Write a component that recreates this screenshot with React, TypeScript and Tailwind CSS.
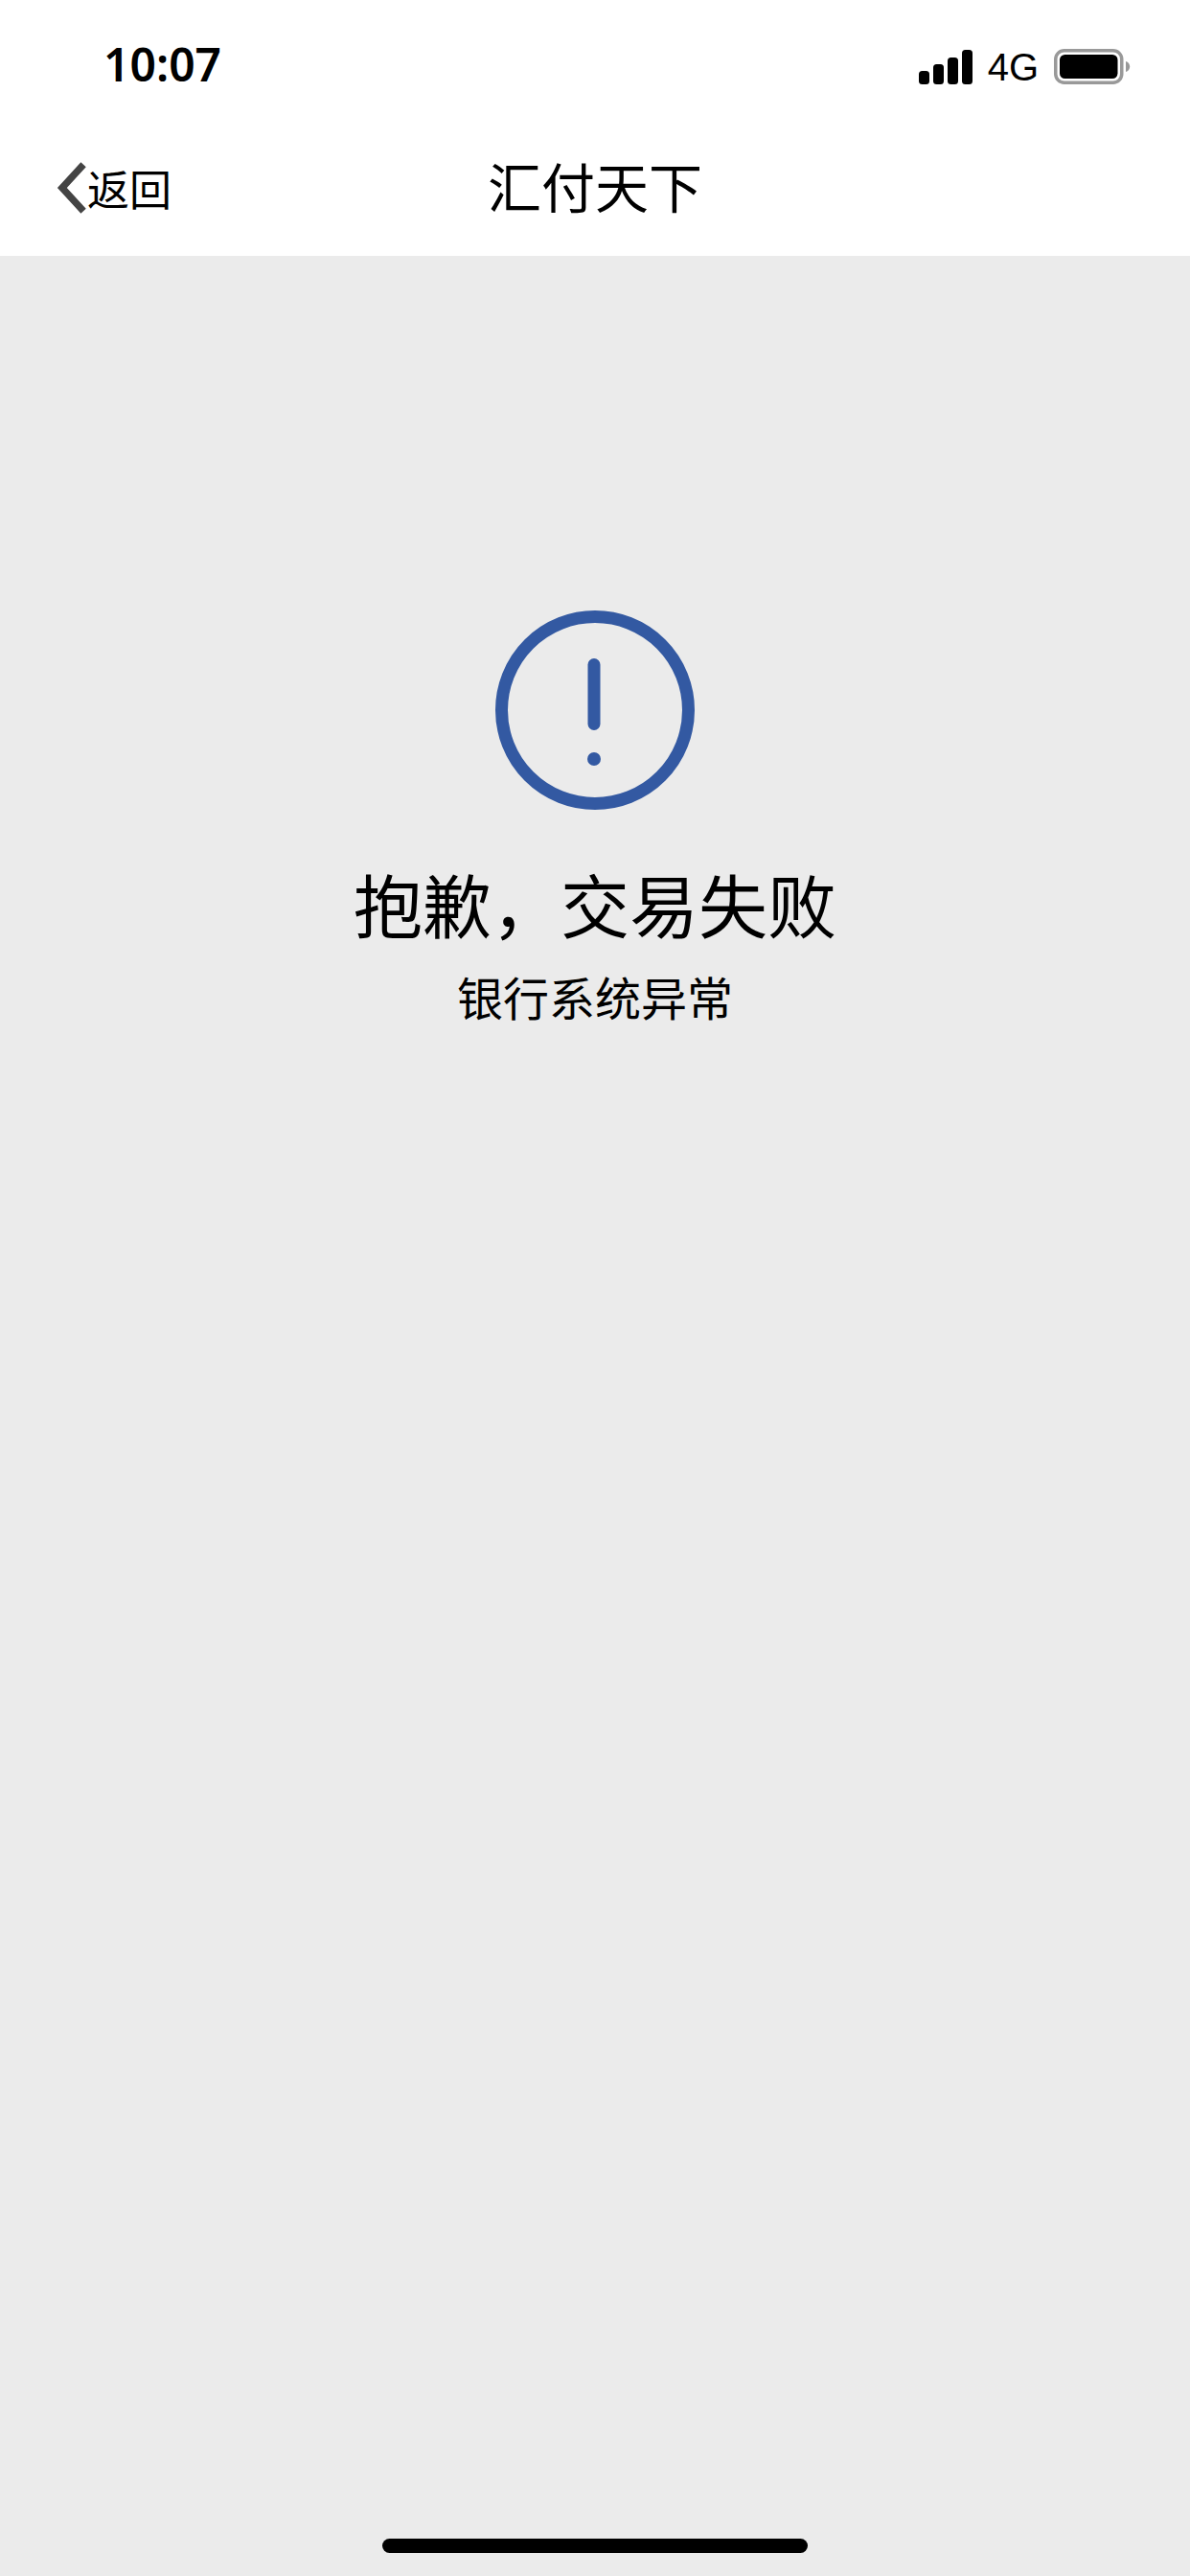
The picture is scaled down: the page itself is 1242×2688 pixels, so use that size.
import React from 'react';

const cjk = { sans: "font-['Noto_Sans_CJK_SC',sans-serif]" };

const StatusBar: React.FC = () => (
  <div className="flex h-[135px] items-start justify-between bg-white pl-[108px] pr-[62px] pt-[34px]">
    <span className="font-['Noto_Sans',sans-serif] text-[48px] font-semibold leading-[66px] text-black">10:07</span>
    <div className="flex items-center">
      {/* Signal */}
      <svg width="56" height="36" viewBox="0 0 56 36" className="mt-[14px] mr-[16px]">
        <rect x="0" y="22" width="11" height="14" rx="3.5" fill="#000" />
        <rect x="15" y="15" width="11" height="21" rx="3.5" fill="#000" />
        <rect x="30" y="8" width="11" height="28" rx="3.5" fill="#000" />
        <rect x="45" y="0" width="11" height="36" rx="3.5" fill="#000" />
      </svg>
      <span className="mt-[14px] mr-[16px] font-['Liberation_Sans',sans-serif] text-[40px] leading-[44px] text-black">4G</span>
      {/* Battery */}
      <svg width="80" height="38" viewBox="0 0 80 38" className="mt-[14px]">
        <rect x="1.75" y="1.75" width="69" height="33.5" rx="9" fill="none" stroke="#999" strokeWidth="3.5" />
        <rect x="6" y="6" width="60.5" height="25" rx="5.5" fill="#000" />
        <path d="M75 13c2.5.8 4.2 3 4.2 5.500s-1.700 4.700-4.200 5.500z" fill="#999" />
      </svg>
    </div>
  </div>
);

const NavBar: React.FC = () => (
  <div className={`relative flex h-[132px] items-start justify-center bg-white pt-[22px] ${cjk.sans}`}>
    <div className="absolute left-[58px] top-[31px] flex items-center">
      <svg width="33" height="60" viewBox="0 0 34 62">
        <path d="M30 6 L7 31 L30 56" fill="none" stroke="#444" strokeWidth="7.500" />
      </svg>
      <span className="text-[44px] leading-[56px] text-black">返回</span>
    </div>
    <span className="text-[56px] leading-[72px] text-black">汇付天下</span>
  </div>
);

const ErrorIcon: React.FC = () => (
  <svg width="208" height="208" viewBox="0 0 208 208">
    <circle cx="104" cy="104" r="97.500" fill="none" stroke="#3359a2" strokeWidth="13" />
    <path d="M103 56.500 V118.500" fill="none" stroke="#3359a2" strokeWidth="13" strokeLinecap="round" />
    <circle cx="103" cy="155" r="7" fill="#3359a2" />
  </svg>
);

export default function App() {
  return (
    <div className="flex min-h-[2688px] w-[1242px] flex-col bg-[#ebebeb]">
      <StatusBar />
      <NavBar />
      <main className={`flex flex-1 flex-col items-center pt-[370px] ${cjk.sans}`}>
        <ErrorIcon />
        <h1 className="mt-[47px] text-[72px] font-normal leading-[100px] text-black">抱歉，交易失败</h1>
        <p className="mt-[14px] text-[48px] leading-[66px] text-black">银行系统异常</p>
      </main>
      <div className="flex justify-center pb-[24px]">
        <div className="h-[15px] w-[444px] rounded-full bg-black" />
      </div>
    </div>
  );
}
